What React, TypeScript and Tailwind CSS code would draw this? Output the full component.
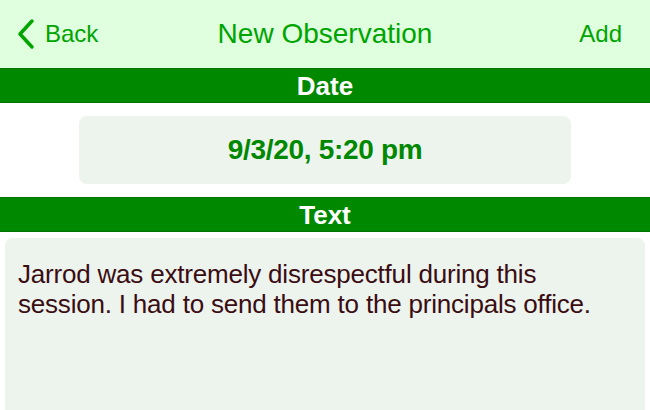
import React from "react";

const SectionBar = ({ title }: { title: string }) => (
  <div className="h-[35px] shrink-0 flex items-center justify-center bg-[#008800] border-y border-[#007400]">
    <span className="text-white text-[26px] font-bold leading-none">{title}</span>
  </div>
);

const App = () => {
  return (
    <div
      className="w-[650px] h-[410px] overflow-hidden bg-white flex flex-col"
      style={{ fontFamily: '"Liberation Sans", Arial, sans-serif' }}
    >
      <div className="h-[68px] shrink-0 bg-[#dfffdf] grid grid-cols-[1fr_auto_1fr] items-center pl-[17px] pr-[28px] text-[#00a400]">
        <button className="flex items-center gap-[10px] text-[24px] justify-self-start">
          <svg width="18" height="32" viewBox="0 0 18 32" fill="none">
            <path d="M15 3 L3 16 L15 29" stroke="#00a400" strokeWidth="3.5" strokeLinecap="round" strokeLinejoin="round" />
          </svg>
          <span>Back</span>
        </button>
        <h1 className="text-[28px] pl-[11px]">New Observation</h1>
        <button className="text-[24px] justify-self-end">Add</button>
      </div>

      <SectionBar title="Date" />

      <div className="h-[94px] shrink-0 flex items-center justify-center">
        <div className="w-[492px] h-[68px] rounded-lg bg-[#edf4ed] flex items-center justify-center">
          <span className="text-[#008800] text-[28px] font-bold tracking-[-0.3px]">9/3/20, 5:20 pm</span>
        </div>
      </div>

      <SectionBar title="Text" />

      <div className="flex-1 px-[5px] pt-[6px] overflow-hidden">
        <div className="h-[220px] rounded-lg bg-[#edf3ed] pl-[13px] pt-[21px]">
          <p className="text-[#3a0d12] text-[26px] leading-[30px] tracking-[-0.2px]">
            Jarrod was extremely disrespectful during this
            <br />
            session. I had to send them to the principals office.
          </p>
        </div>
      </div>
    </div>
  );
};

export default App;
